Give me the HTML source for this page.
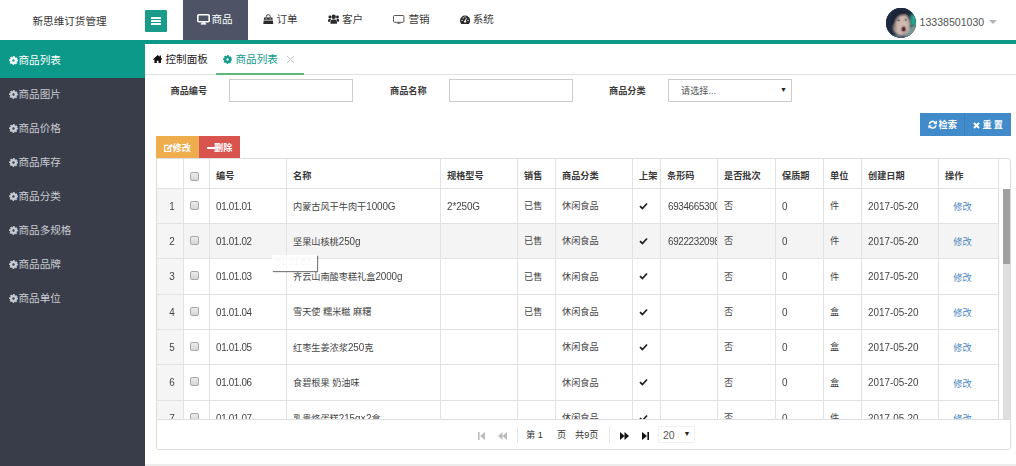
<!DOCTYPE html>
<html lang="zh-CN">
<head>
<meta charset="utf-8">
<title>新思维订货管理</title>
<style>
*{box-sizing:border-box;margin:0;padding:0}
html,body{width:1016px;height:466px;overflow:hidden;background:#fff}
body{font-family:"Liberation Sans","Noto Sans CJK SC",sans-serif;font-size:10.58px;color:#333;position:relative}
.abs{position:absolute}
svg{display:block}
/* header */
#hdr{position:absolute;left:0;top:0;width:1016px;height:44px;background:#fff;border-bottom:4px solid #0d998a}
#logo{position:absolute;left:32.500px;top:12px;font-size:10.58px;color:#333;white-space:nowrap;line-height:18px}
#burger{position:absolute;left:145px;top:10px;width:22px;height:22px;background:#1a9c8b;border-radius:1px}
#burger i{position:absolute;left:6px;width:10px;height:1.500px;background:#fff;border-radius:.5px}
.nav{position:absolute;top:0;height:40px;line-height:39px;font-size:10.58px;color:#3a3a3a;white-space:nowrap}
.nav svg{position:absolute}
.nav.on{background:#4e5465;color:#fff}
#user{position:absolute;left:919.500px;top:12.500px;font-size:10.58px;color:#555;line-height:18px}
#avatar{position:absolute;left:885.700px;top:7.500px;width:30px;height:30px;border-radius:50%;overflow:hidden;background:#1f3f4c}
#caret{position:absolute;left:989px;top:20px;width:0;height:0;border:4px solid transparent;border-top:4px solid #b5b5b5}
/* sidebar */
#side{position:absolute;left:0;top:44px;width:145px;height:422px;background:#393d49}
.si{position:absolute;left:0;width:145px;height:34px;line-height:32.500px;color:#c9ccd3;font-size:10.58px;padding-left:18.500px;white-space:nowrap}
.si.on{background:#0d998a;color:#fff}
.si svg{position:absolute;left:9px;top:12px}
/* tabs */
#tabs{position:absolute;left:145px;top:44px;width:871px;height:31px;border-bottom:1px solid #e2e2e2;background:#fff}
.tab{position:absolute;top:0;height:31px;line-height:31px;font-size:10.58px;white-space:nowrap}
.tab svg{position:absolute}
/* form */
.lbl{position:absolute;top:81.800px;font-size:9.170px;font-weight:bold;color:#3a3a3a;line-height:18px;white-space:nowrap}
.inp{position:absolute;top:79px;height:23px;width:124px;border:1px solid #ccc;background:#fff}
.btn{position:absolute;height:22px;line-height:22px;color:#fff;font-size:9.170px;font-weight:bold;white-space:nowrap}
.btn svg{position:absolute}
.btn span{position:absolute;top:0}
/* table */
#grid{position:absolute;left:156px;top:158px;width:855px;height:292px;border:1px solid #ddd;border-radius:0 3px 3px 3px;overflow:hidden;background:#fff}
.row{position:absolute;left:0;width:842px;border-bottom:1px solid #e2e2e2}
.row.h{top:0;height:30px;font-weight:bold;font-size:9.170px;color:#383838}
.row.d{font-size:9.170px;color:#444}
.row.alt{background:#f4f4f4}
.c{position:absolute;top:0;height:100%;border-left:1px solid #e2e2e2;padding-left:6px;white-space:nowrap;overflow:hidden}
.row.h .c{line-height:34px}
.row.d .c{line-height:inherit}
.rn{background:#f5f5f5;text-align:center;padding-left:4px !important;border-left:none !important}
.cb{position:absolute;left:6px;top:12px;width:9px;height:9px;border:1px solid #a8a8a8;border-radius:2px;background:linear-gradient(#ececec,#d6d6d6)}
.row.h .cb{top:13px}
.ck{position:absolute;left:6px;top:12.500px}
.l{font-size:9.900px;letter-spacing:-.1px;display:inline-block;transform:scaleY(1.15);transform-origin:50% 52%}
.l.d{letter-spacing:0}
.l.n{letter-spacing:-.34px}
a.lk{color:#4a86c2;text-decoration:none;display:inline-block;transform:translateY(.6px)}
#pager{position:absolute;left:0;top:260px;width:853px;height:30px;background:#fff;border-top:1px solid #ddd;font-size:9.170px;color:#333}
</style>
</head>
<body>
<div id="hdr">
  <div id="logo">新思维订货管理</div>
  <div id="burger"><i style="top:7.100px"></i><i style="top:10.250px"></i><i style="top:13.400px"></i></div>
  <div class="nav on" style="left:183px;width:65px;padding-left:28.500px">
    <svg style="left:14px;top:14px" width="13" height="11" viewBox="0 0 13 11"><rect x="0.800" y="0.800" width="11.400" height="7" rx="1" fill="none" stroke="#fff" stroke-width="1.600"/><rect x="3.800" y="9.200" width="5.400" height="1.400" fill="#fff"/><rect x="5.300" y="8" width="2.400" height="1.500" fill="#fff"/></svg>商品</div>
  <div class="nav" style="left:262px;padding-left:14.500px">
    <svg style="left:1px;top:13.500px" width="10.500" height="10.500" viewBox="0 0 10.500 10.500"><path d="M0.200 10.500 L0.700 6.600 H9.800 L10.300 10.500 Z" fill="#2b2b2b"/><path d="M0.800 5.800 L1.100 3.400 H9.400 L9.700 5.800 Z" fill="#2b2b2b"/><path d="M3.300 5.200 V2.600 A1.950 1.950 0 0 1 7.200 2.600 V5.200" fill="none" stroke="#2b2b2b" stroke-width="0.900"/><path d="M3.300 3.800 V5.400 M7.200 3.800 V5.400" stroke="#fff" stroke-width="0.700"/></svg>订单</div>
  <div class="nav" style="left:327px;padding-left:15px">
    <svg style="left:0.800px;top:14px" width="11.400" height="10" viewBox="0 0 13 11"><circle cx="6.500" cy="3" r="2.500" fill="#2b2b2b"/><path d="M2.800 11 V8.500 A2.500 2.500 0 0 1 5.300 6 H7.700 A2.500 2.500 0 0 1 10.200 8.500 V11 Z" fill="#2b2b2b"/><circle cx="2.200" cy="3.200" r="1.700" fill="#2b2b2b"/><circle cx="10.800" cy="3.200" r="1.700" fill="#2b2b2b"/><path d="M0 8.500 V7 A2 2 0 0 1 2 5.200 H3.400 L2.300 8.500 Z M13 8.500 V7 A2 2 0 0 0 11 5.200 H9.600 L10.700 8.500 Z" fill="#2b2b2b"/></svg>客户</div>
  <div class="nav" style="left:393px;padding-left:15.500px">
    <svg style="left:0.300px;top:14.500px" width="11.400" height="9.500" viewBox="0 0 11.400 9.500"><rect x="0.500" y="0.500" width="10.400" height="6.800" rx="0.900" fill="none" stroke="#555" stroke-width="1"/><rect x="3.600" y="8.600" width="4.200" height="0.900" fill="#555"/><rect x="4.900" y="7.300" width="1.600" height="1.500" fill="#555"/></svg>营销</div>
  <div class="nav" style="left:459px;padding-left:13.700px">
    <svg style="left:0.500px;top:15px" width="10.200" height="9" viewBox="0 0 10.200 9"><path d="M1.300 9 A5.100 5.100 0 1 1 8.900 9 Z" fill="#2b2b2b"/><circle cx="5.100" cy="6.600" r="1.150" fill="#fff"/><path d="M5.100 6.500 L6.500 3" stroke="#fff" stroke-width="0.900"/><circle cx="2.100" cy="5.400" r="0.650" fill="#fff"/><circle cx="8.100" cy="5.400" r="0.650" fill="#fff"/><circle cx="3.200" cy="2.900" r="0.650" fill="#fff"/><circle cx="5.100" cy="1.900" r="0.600" fill="#fff"/></svg>系统</div>
  <div id="avatar">
    <svg width="30" height="30" viewBox="0 0 30 30"><defs><filter id="bl" x="-20%" y="-20%" width="140%" height="140%"><feGaussianBlur stdDeviation="0.9"/></filter></defs><rect width="30" height="30" fill="#1d2c42"/><g filter="url(#bl)"><rect x="-2" y="-2" width="34" height="34" fill="#1d2c42"/><path d="M21 21 L32 16 V32 H18 Z" fill="#7f9794"/><rect x="24.800" y="7" width="6" height="10" fill="#27a68f"/><ellipse cx="15.500" cy="16.500" rx="8.300" ry="11" fill="#cfb9b0"/><path d="M6.500 19 Q2.500 7 11 3 Q20 0 24.500 8 Q21 5.500 17.500 7.500 Q15 6.500 12.500 9 Q9.500 10.500 9 18 Z" fill="#1b2233"/><ellipse cx="9.300" cy="20" rx="1.600" ry="4.500" fill="#a8948f"/><ellipse cx="17.700" cy="21.400" rx="2.300" ry="3" fill="#56202c"/><ellipse cx="17.700" cy="23.300" rx="1.500" ry="0.900" fill="#d99aa0"/><ellipse cx="12.600" cy="12.200" rx="1.600" ry="0.900" fill="#4a4046"/><ellipse cx="19.800" cy="11.800" rx="1.400" ry="0.800" fill="#4a4046"/><path d="M2 32 Q8 25 14 29 Q19 30.500 23 27.500 L26 32 Z" fill="#5f7f84"/></g><ellipse cx="17.700" cy="21.200" rx="1.500" ry="2.100" fill="#4a1a26" opacity=".8"/><ellipse cx="12.600" cy="12.300" rx="1.100" ry="0.600" fill="#3a3238" opacity=".7"/><ellipse cx="19.800" cy="11.900" rx="1" ry="0.600" fill="#3a3238" opacity=".7"/></svg>
  </div>
  <div id="user">13338501030</div>
  <div id="caret"></div>
</div>

<div id="side">
  <div class="si on" style="top:0"><svg width="9" height="9" viewBox="-4.500 -4.500 9 9"><circle r="2.350" fill="none" stroke="currentColor" stroke-width="2.300"/><circle r="3.800" fill="none" stroke="currentColor" stroke-width="1.400" stroke-dasharray="1.592 1.392" transform="rotate(-12)"/></svg>商品列表</div>
  <div class="si" style="top:34px"><svg width="9" height="9" viewBox="-4.500 -4.500 9 9"><circle r="2.350" fill="none" stroke="currentColor" stroke-width="2.300"/><circle r="3.800" fill="none" stroke="currentColor" stroke-width="1.400" stroke-dasharray="1.592 1.392" transform="rotate(-12)"/></svg>商品图片</div>
  <div class="si" style="top:68px"><svg width="9" height="9" viewBox="-4.500 -4.500 9 9"><circle r="2.350" fill="none" stroke="currentColor" stroke-width="2.300"/><circle r="3.800" fill="none" stroke="currentColor" stroke-width="1.400" stroke-dasharray="1.592 1.392" transform="rotate(-12)"/></svg>商品价格</div>
  <div class="si" style="top:102px"><svg width="9" height="9" viewBox="-4.500 -4.500 9 9"><circle r="2.350" fill="none" stroke="currentColor" stroke-width="2.300"/><circle r="3.800" fill="none" stroke="currentColor" stroke-width="1.400" stroke-dasharray="1.592 1.392" transform="rotate(-12)"/></svg>商品库存</div>
  <div class="si" style="top:136px"><svg width="9" height="9" viewBox="-4.500 -4.500 9 9"><circle r="2.350" fill="none" stroke="currentColor" stroke-width="2.300"/><circle r="3.800" fill="none" stroke="currentColor" stroke-width="1.400" stroke-dasharray="1.592 1.392" transform="rotate(-12)"/></svg>商品分类</div>
  <div class="si" style="top:170px"><svg width="9" height="9" viewBox="-4.500 -4.500 9 9"><circle r="2.350" fill="none" stroke="currentColor" stroke-width="2.300"/><circle r="3.800" fill="none" stroke="currentColor" stroke-width="1.400" stroke-dasharray="1.592 1.392" transform="rotate(-12)"/></svg>商品多规格</div>
  <div class="si" style="top:204px"><svg width="9" height="9" viewBox="-4.500 -4.500 9 9"><circle r="2.350" fill="none" stroke="currentColor" stroke-width="2.300"/><circle r="3.800" fill="none" stroke="currentColor" stroke-width="1.400" stroke-dasharray="1.592 1.392" transform="rotate(-12)"/></svg>商品品牌</div>
  <div class="si" style="top:238px"><svg width="9" height="9" viewBox="-4.500 -4.500 9 9"><circle r="2.350" fill="none" stroke="currentColor" stroke-width="2.300"/><circle r="3.800" fill="none" stroke="currentColor" stroke-width="1.400" stroke-dasharray="1.592 1.392" transform="rotate(-12)"/></svg>商品单位</div>
</div>

<div id="tabs">
  <div class="tab" style="left:20.500px;color:#222"><svg style="left:-12.800px;top:10.500px" width="9.400" height="8.200" viewBox="0 0 10 8.700"><path d="M5 0 L0 4.400 L0.700 5.200 L1.500 4.600 V8.700 H4.100 V6.100 H5.900 V8.700 H8.500 V4.600 L9.300 5.200 L10 4.400 L8.500 3.050 V0.600 H7.100 V1.850 Z" fill="#111"/></svg>控制面板</div>
  <div class="tab" style="left:90.500px;color:#0d998a"><svg style="left:-12.500px;top:11px" width="9" height="9" viewBox="-4.500 -4.500 9 9"><circle r="2.350" fill="none" stroke="currentColor" stroke-width="2.300"/><circle r="3.800" fill="none" stroke="currentColor" stroke-width="1.400" stroke-dasharray="1.592 1.392" transform="rotate(-12)"/></svg>商品列表</div>
  <svg class="abs" style="left:141px;top:11px" width="9" height="9" viewBox="0 0 9 9"><path d="M0.800 0.800 L8.200 8.200 M8.200 0.800 L0.800 8.200" stroke="#c2c2c2" stroke-width="1"/></svg>
  <div class="abs" style="left:71px;top:29px;width:88px;height:2px;background:#5fb878"></div>
</div>

<div class="lbl" style="left:170.500px">商品编号</div><div class="inp" style="left:229px"></div>
<div class="lbl" style="left:390px">商品名称</div><div class="inp" style="left:449px"></div>
<div class="lbl" style="left:609px">商品分类</div><div class="inp" style="left:668px"><span style="position:absolute;left:12px;top:2px;font-size:9.170px;color:#555;line-height:18px">请选择...</span><span style="position:absolute;right:4px;top:5px;font-size:7px;line-height:10px;color:#222">▼</span></div>

<div class="btn" style="left:920px;top:113px;width:44px;height:23px;background:#428bca"><svg style="left:8px;top:7px" width="9.400" height="9.400" viewBox="0 0 10 10"><path d="M1.500 4.300 A3.600 3.600 0 0 1 7.800 2.800" fill="none" stroke="#fff" stroke-width="1.700"/><path d="M9.600 0.600 V4.400 H5.800 Z" fill="#fff"/><path d="M8.500 5.700 A3.600 3.600 0 0 1 2.200 7.200" fill="none" stroke="#fff" stroke-width="1.700"/><path d="M0.400 9.400 V5.600 H4.200 Z" fill="#fff"/></svg><span style="left:18.500px;line-height:24.400px">检索</span></div>
<div class="btn" style="left:964px;top:113px;width:47px;height:23px;background:#428bca;border-left:1px solid #3b7fbb"><svg style="left:8px;top:8.500px" width="7" height="7" viewBox="0 0 7 7"><path d="M1 1 L6 6 M6 1 L1 6" stroke="#fff" stroke-width="2"/></svg><span style="left:17.500px;letter-spacing:2px;line-height:24.400px">重置</span></div>
<div class="btn" style="left:156px;top:136px;width:43px;background:#f0ad4e"><svg style="left:8px;top:7.500px" width="9.200" height="8" viewBox="0 0 9.200 8"><path d="M6.600 4.600 V7.400 H0.600 V1.400 H4.600" fill="none" stroke="#fff" stroke-width="1.200"/><path d="M3 5.600 L3.300 3.800 L7.300 0 L8.900 1.500 L4.900 5.300 Z" fill="#fff"/></svg><span style="left:16.500px;line-height:24.400px">修改</span></div>
<div class="btn" style="left:199px;top:136px;width:41px;background:#d9534f"><svg style="left:7.500px;top:10.600px" width="8.500" height="2.200" viewBox="0 0 8.500 2.200"><rect width="8.500" height="2.200" fill="#fff"/></svg><span style="left:15px;line-height:24.400px">删除</span></div>

<div id="grid"><!--G--><div class="row h" style="height:30px">
<div class="c rn" style="left:0;width:26px;background:#fff"></div>
<div class="c" style="left:26px;width:26px"><span class="cb"></span></div>
<div class="c" style="left:52px;width:77px">编号</div>
<div class="c" style="left:129px;width:154px">名称</div>
<div class="c" style="left:283px;width:77px">规格型号</div>
<div class="c" style="left:360px;width:38px">销售</div>
<div class="c" style="left:398px;width:77px">商品分类</div>
<div class="c" style="left:475px;width:28px">上架</div>
<div class="c" style="left:503px;width:57px">条形码</div>
<div class="c" style="left:560px;width:58px">是否批次</div>
<div class="c" style="left:618px;width:48px">保质期</div>
<div class="c" style="left:666px;width:38px">单位</div>
<div class="c" style="left:704px;width:77px">创建日期</div>
<div class="c" style="left:781px;width:60px">操作</div>
<div class="c" style="left:841px;width:13px"></div>
</div>
<div class="row d" style="top:30px;height:35px;line-height:35px">
<div class="c rn" style="left:0;width:26px"><span class="l">1</span></div>
<div class="c" style="left:26px;width:26px"><span class="cb"></span></div>
<div class="c" style="left:52px;width:77px"><span class="l n">01.01.01</span></div>
<div class="c" style="left:129px;width:154px">内蒙古风干牛肉干<span class="l">1000G</span></div>
<div class="c" style="left:283px;width:77px"><span class="l">2*250G</span></div>
<div class="c" style="left:360px;width:38px">已售</div>
<div class="c" style="left:398px;width:77px">休闲食品</div>
<div class="c" style="left:475px;width:28px"><svg class="ck" width="9" height="8" viewBox="0 0 9 8"><path d="M1 4.200 L3.400 6.500 L8 1.500" fill="none" stroke="#222" stroke-width="1.800"/></svg></div>
<div class="c" style="left:503px;width:57px;padding-left:7px"><span class="l n">6934665300</span></div>
<div class="c" style="left:560px;width:58px">否</div>
<div class="c" style="left:618px;width:48px"><span class="l">0</span></div>
<div class="c" style="left:666px;width:38px">件</div>
<div class="c" style="left:704px;width:77px"><span class="l d">2017-05-20</span></div>
<div class="c" style="left:781px;width:60px;padding-left:14.300px"><a class="lk">修改</a></div>
</div>
<div class="row d alt" style="top:65px;height:35px;line-height:35px">
<div class="c rn" style="left:0;width:26px"><span class="l">2</span></div>
<div class="c" style="left:26px;width:26px"><span class="cb"></span></div>
<div class="c" style="left:52px;width:77px"><span class="l n">01.01.02</span></div>
<div class="c" style="left:129px;width:154px">坚果山核桃<span class="l">250g</span></div>
<div class="c" style="left:283px;width:77px"></div>
<div class="c" style="left:360px;width:38px">已售</div>
<div class="c" style="left:398px;width:77px">休闲食品</div>
<div class="c" style="left:475px;width:28px"><svg class="ck" width="9" height="8" viewBox="0 0 9 8"><path d="M1 4.200 L3.400 6.500 L8 1.500" fill="none" stroke="#222" stroke-width="1.800"/></svg></div>
<div class="c" style="left:503px;width:57px;padding-left:7px"><span class="l n">6922232098</span></div>
<div class="c" style="left:560px;width:58px">否</div>
<div class="c" style="left:618px;width:48px"><span class="l">0</span></div>
<div class="c" style="left:666px;width:38px">件</div>
<div class="c" style="left:704px;width:77px"><span class="l d">2017-05-20</span></div>
<div class="c" style="left:781px;width:60px;padding-left:14.300px"><a class="lk">修改</a></div>
</div>
<div class="row d" style="top:100px;height:36px;line-height:36px">
<div class="c rn" style="left:0;width:26px"><span class="l">3</span></div>
<div class="c" style="left:26px;width:26px"><span class="cb"></span></div>
<div class="c" style="left:52px;width:77px"><span class="l n">01.01.03</span></div>
<div class="c" style="left:129px;width:154px">齐云山南酸枣糕礼盒<span class="l">2000g</span></div>
<div class="c" style="left:283px;width:77px"></div>
<div class="c" style="left:360px;width:38px">已售</div>
<div class="c" style="left:398px;width:77px">休闲食品</div>
<div class="c" style="left:475px;width:28px"><svg class="ck" width="9" height="8" viewBox="0 0 9 8"><path d="M1 4.200 L3.400 6.500 L8 1.500" fill="none" stroke="#222" stroke-width="1.800"/></svg></div>
<div class="c" style="left:503px;width:57px;padding-left:7px"></div>
<div class="c" style="left:560px;width:58px">否</div>
<div class="c" style="left:618px;width:48px"><span class="l">0</span></div>
<div class="c" style="left:666px;width:38px">件</div>
<div class="c" style="left:704px;width:77px"><span class="l d">2017-05-20</span></div>
<div class="c" style="left:781px;width:60px;padding-left:14.300px"><a class="lk">修改</a></div>
</div>
<div class="row d" style="top:136px;height:35px;line-height:35px">
<div class="c rn" style="left:0;width:26px"><span class="l">4</span></div>
<div class="c" style="left:26px;width:26px"><span class="cb"></span></div>
<div class="c" style="left:52px;width:77px"><span class="l n">01.01.04</span></div>
<div class="c" style="left:129px;width:154px">雪天使 糯米糍 麻糬</div>
<div class="c" style="left:283px;width:77px"></div>
<div class="c" style="left:360px;width:38px">已售</div>
<div class="c" style="left:398px;width:77px">休闲食品</div>
<div class="c" style="left:475px;width:28px"><svg class="ck" width="9" height="8" viewBox="0 0 9 8"><path d="M1 4.200 L3.400 6.500 L8 1.500" fill="none" stroke="#222" stroke-width="1.800"/></svg></div>
<div class="c" style="left:503px;width:57px;padding-left:7px"></div>
<div class="c" style="left:560px;width:58px">否</div>
<div class="c" style="left:618px;width:48px"><span class="l">0</span></div>
<div class="c" style="left:666px;width:38px">盒</div>
<div class="c" style="left:704px;width:77px"><span class="l d">2017-05-20</span></div>
<div class="c" style="left:781px;width:60px;padding-left:14.300px"><a class="lk">修改</a></div>
</div>
<div class="row d" style="top:171px;height:35px;line-height:35px">
<div class="c rn" style="left:0;width:26px"><span class="l">5</span></div>
<div class="c" style="left:26px;width:26px"><span class="cb"></span></div>
<div class="c" style="left:52px;width:77px"><span class="l n">01.01.05</span></div>
<div class="c" style="left:129px;width:154px">红枣生姜浓浆<span class="l">250</span>克</div>
<div class="c" style="left:283px;width:77px"></div>
<div class="c" style="left:360px;width:38px"></div>
<div class="c" style="left:398px;width:77px">休闲食品</div>
<div class="c" style="left:475px;width:28px"><svg class="ck" width="9" height="8" viewBox="0 0 9 8"><path d="M1 4.200 L3.400 6.500 L8 1.500" fill="none" stroke="#222" stroke-width="1.800"/></svg></div>
<div class="c" style="left:503px;width:57px;padding-left:7px"></div>
<div class="c" style="left:560px;width:58px">否</div>
<div class="c" style="left:618px;width:48px"><span class="l">0</span></div>
<div class="c" style="left:666px;width:38px">盒</div>
<div class="c" style="left:704px;width:77px"><span class="l d">2017-05-20</span></div>
<div class="c" style="left:781px;width:60px;padding-left:14.300px"><a class="lk">修改</a></div>
</div>
<div class="row d" style="top:206px;height:36px;line-height:36px">
<div class="c rn" style="left:0;width:26px"><span class="l">6</span></div>
<div class="c" style="left:26px;width:26px"><span class="cb"></span></div>
<div class="c" style="left:52px;width:77px"><span class="l n">01.01.06</span></div>
<div class="c" style="left:129px;width:154px">食碧根果 奶油味</div>
<div class="c" style="left:283px;width:77px"></div>
<div class="c" style="left:360px;width:38px"></div>
<div class="c" style="left:398px;width:77px">休闲食品</div>
<div class="c" style="left:475px;width:28px"><svg class="ck" width="9" height="8" viewBox="0 0 9 8"><path d="M1 4.200 L3.400 6.500 L8 1.500" fill="none" stroke="#222" stroke-width="1.800"/></svg></div>
<div class="c" style="left:503px;width:57px;padding-left:7px"></div>
<div class="c" style="left:560px;width:58px">否</div>
<div class="c" style="left:618px;width:48px"><span class="l">0</span></div>
<div class="c" style="left:666px;width:38px">盒</div>
<div class="c" style="left:704px;width:77px"><span class="l d">2017-05-20</span></div>
<div class="c" style="left:781px;width:60px;padding-left:14.300px"><a class="lk">修改</a></div>
</div>
<div class="row d" style="top:242px;height:35px;line-height:35px">
<div class="c rn" style="left:0;width:26px"><span class="l">7</span></div>
<div class="c" style="left:26px;width:26px"><span class="cb"></span></div>
<div class="c" style="left:52px;width:77px"><span class="l n">01.01.07</span></div>
<div class="c" style="left:129px;width:154px">乳贵烙蛋糕<span class="l">215g×2</span>盒</div>
<div class="c" style="left:283px;width:77px"></div>
<div class="c" style="left:360px;width:38px"></div>
<div class="c" style="left:398px;width:77px">休闲食品</div>
<div class="c" style="left:475px;width:28px"><svg class="ck" width="9" height="8" viewBox="0 0 9 8"><path d="M1 4.200 L3.400 6.500 L8 1.500" fill="none" stroke="#222" stroke-width="1.800"/></svg></div>
<div class="c" style="left:503px;width:57px;padding-left:7px"></div>
<div class="c" style="left:560px;width:58px">否</div>
<div class="c" style="left:618px;width:48px"><span class="l">0</span></div>
<div class="c" style="left:666px;width:38px">件</div>
<div class="c" style="left:704px;width:77px"><span class="l d">2017-05-20</span></div>
<div class="c" style="left:781px;width:60px;padding-left:14.300px"><a class="lk">修改</a></div>
</div>
<div class="abs" style="left:841px;top:30px;width:13px;height:231px;background:#fff;border-left:1px solid #ddd"></div>
<div class="abs" style="left:846px;top:30px;width:8px;height:231px;background:#dedede"></div>
<div class="abs" style="left:846px;top:30px;width:8px;height:75px;background:#a0a0a0"></div>
<div id="pager">
<svg class="abs" style="left:321px;top:11.700px" width="8" height="8" viewBox="0 0 8 8"><rect x="0" y="0" width="1.600" height="8" fill="#bbb"/><path d="M7 0 L2 4 L7 8 Z" fill="#bbb"/></svg>
<svg class="abs" style="left:341px;top:11.700px" width="9" height="8" viewBox="0 0 9 8"><path d="M4.500 0 L0 4 L4.500 8 Z M9 0 L4.500 4 L9 8 Z" fill="#bbb"/></svg>
<div class="abs" style="left:360px;top:7px;width:1px;height:16px;background:#e6e6e6"></div>
<div class="abs" style="left:369px;top:7px;line-height:16px">第 1</div>
<div class="abs" style="left:400px;top:7px;line-height:16px">页</div>
<div class="abs" style="left:418px;top:7px;line-height:16px">共9页</div>
<div class="abs" style="left:452px;top:7px;width:1px;height:16px;background:#e6e6e6"></div>
<svg class="abs" style="left:463px;top:11.700px" width="9" height="8" viewBox="0 0 9 8"><path d="M0 0 L4.500 4 L0 8 Z M4.500 0 L9 4 L4.500 8 Z" fill="#111"/></svg>
<svg class="abs" style="left:485px;top:11.700px" width="7" height="8" viewBox="0 0 7 8"><rect x="5.400" y="0" width="1.600" height="8" fill="#111"/><path d="M0 0 L5 4 L0 8 Z" fill="#111"/></svg>
<div class="abs" style="left:501px;top:6px;width:37px;height:17px;border:1px solid #f1f1f1"></div>
<div class="abs" style="left:506px;top:7px;line-height:16px;color:#555;font-size:10.500px">20</div>
<div class="abs" style="left:526.500px;top:8px;line-height:12px;font-size:7px;color:#222">▼</div>
</div><!--/G--></div>
<div class="abs" style="left:272px;top:255px;width:45px;height:15.500px;background:rgba(255,255,255,.8);box-shadow:1px 1px 1px rgba(0,0,0,.5);font-size:9px;line-height:15px;padding-left:4px;color:rgba(60,60,60,.07);white-space:nowrap;z-index:5">01.01.03</div>
<div class="abs" style="left:145px;top:464px;width:871px;height:2px;background:#ececec"></div>
</body>
</html>
